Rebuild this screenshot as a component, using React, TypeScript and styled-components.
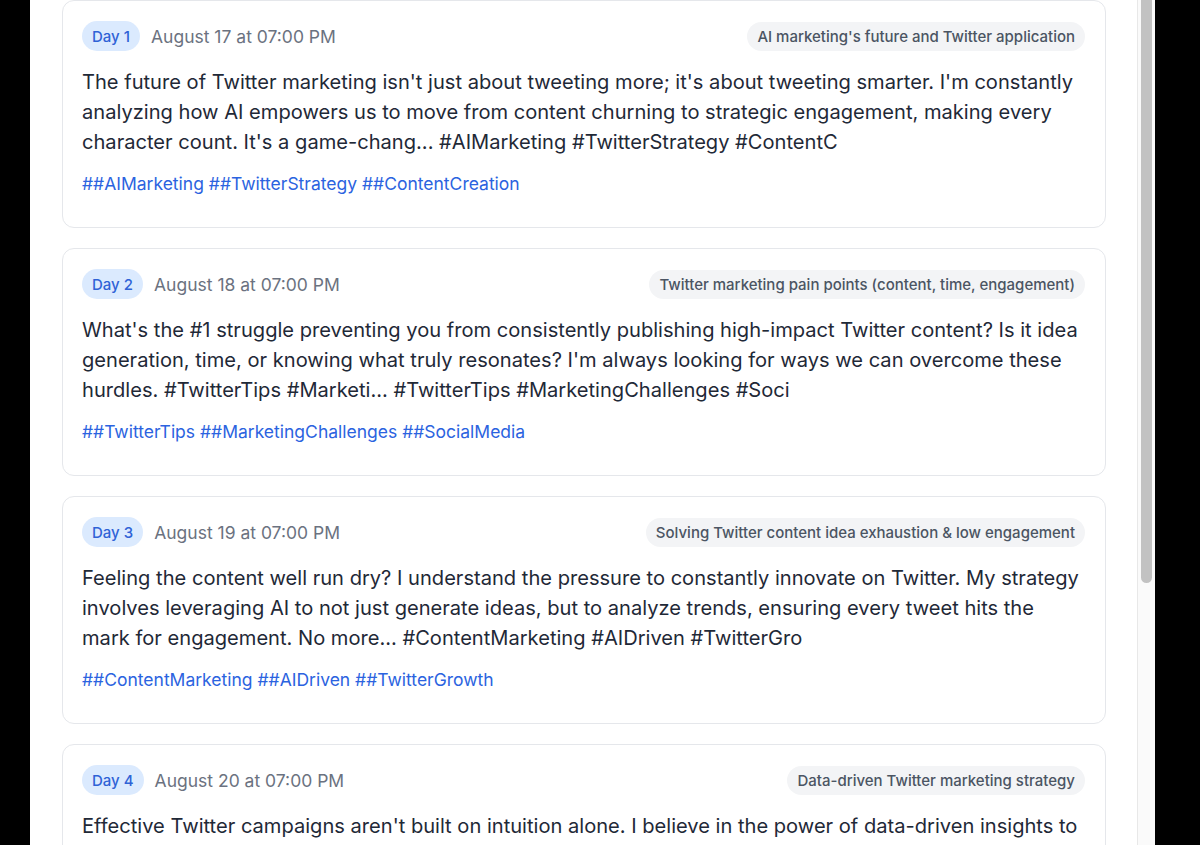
import React from "react";
import styled, { createGlobalStyle } from "styled-components";

const Global = createGlobalStyle`
  html, body {
    margin: 0;
    padding: 0;
    background: #000;
    height: 100%;
    overflow: hidden;
  }
  #root { height: 100%; }
  * { box-sizing: border-box; }
`;

const Frame = styled.div`
  display: flex;
  height: 845px;
  padding-left: 30px;
  padding-right: 45px;
  background: #000;
`;

const Panel = styled.div`
  flex: 1;
  display: flex;
  height: 100%;
  background: #fff;
  font-family: Inter, "Noto Sans", sans-serif;
`;

const Viewport = styled.div`
  flex: 1;
  min-width: 0;
  height: 100%;
  overflow: hidden;
`;

const ScrollTrack = styled.div`
  flex: 0 0 18px;
  height: 100%;
  background: #fafafa;
  border-left: 1px solid #e8e8e8;
  padding: 0 3px 0 3px;
`;

const ScrollThumb = styled.div`
  height: 583px;
  background: #c2c2c2;
  border-radius: 0 0 6px 6px;
`;

const List = styled.div`
  display: flex;
  flex-direction: column;
  gap: 20px;
  padding: 0 31px 8px 32px;
`;

const Card = styled.article`
  border: 1px solid #e5e7eb;
  border-radius: 12px;
  background: #fff;
  padding: 20px 20px 31px 19px;
`;

const Header = styled.div`
  display: flex;
  align-items: center;
  justify-content: space-between;
  margin-bottom: 16px;
`;

const Left = styled.div`
  display: flex;
  align-items: center;
  gap: 11px;
`;

const DayBadge = styled.span`
  display: inline-flex;
  align-items: center;
  height: 30px;
  padding: 0 10px;
  border-radius: 999px;
  background: #dbeafe;
  color: #2f62d6;
  font-size: 15px;
  font-weight: 500;
`;

const DateText = styled.span`
  color: #6b7280;
  font-size: 17.5px;
`;

const Topic = styled.span`
  display: inline-flex;
  align-items: center;
  height: 29px;
  padding: 0 10px;
  border-radius: 999px;
  background: #f3f4f6;
  color: #4b5563;
  font-size: 15px;
  font-weight: 500;
`;

const Body = styled.p`
  margin: 0;
  color: #1f2937;
  font-size: 20.1px;
  line-height: 30px;
`;

const Tags = styled.div`
  margin-top: 15px;
  color: #2b63e0;
  font-size: 17.5px;
  line-height: 24px;
`;

const posts = [
  {
    day: 1,
    date: "August 17 at 07:00 PM",
    topic: "AI marketing's future and Twitter application",
    body:
      "The future of Twitter marketing isn't just about tweeting more; it's about tweeting smarter. I'm constantly analyzing how AI empowers us to move from content churning to strategic engagement, making every character count. It's a game-chang... #AIMarketing #TwitterStrategy #ContentC",
    tags: ["#AIMarketing", "#TwitterStrategy", "#ContentCreation"],
  },
  {
    day: 2,
    date: "August 18 at 07:00 PM",
    topic: "Twitter marketing pain points (content, time, engagement)",
    body:
      "What's the #1 struggle preventing you from consistently publishing high-impact Twitter content?  Is it idea generation, time, or knowing what truly resonates? I'm always looking for ways we can overcome these hurdles. #TwitterTips #Marketi... #TwitterTips #MarketingChallenges #Soci",
    tags: ["#TwitterTips", "#MarketingChallenges", "#SocialMedia"],
  },
  {
    day: 3,
    date: "August 19 at 07:00 PM",
    topic: "Solving Twitter content idea exhaustion & low engagement",
    body:
      "Feeling the content well run dry? I understand the pressure to constantly innovate on Twitter. My strategy involves leveraging AI to not just generate ideas, but to analyze trends, ensuring every tweet hits the mark for engagement. No more... #ContentMarketing #AIDriven #TwitterGro",
    tags: ["#ContentMarketing", "#AIDriven", "#TwitterGrowth"],
  },
  {
    day: 4,
    date: "August 20 at 07:00 PM",
    topic: "Data-driven Twitter marketing strategy",
    body:
      "Effective Twitter campaigns aren't built on intuition alone. I believe in the power of data-driven insights to refine every post, timing and message, turning analytics into action. Let the numbers lead... #DataDriven #TwitterMarketing #Analyt",
    tags: ["#DataDriven", "#TwitterMarketing", "#Analytics"],
  },
  {
    day: 5,
    date: "August 21 at 07:00 PM",
    topic: "Building community through consistent engagement",
    body:
      "Growth on Twitter comes from conversations, not broadcasts. Replying thoughtfully, sharing others' ideas and showing up consistently builds a community that trusts your voice. Engagement is the... #Community #Engagement #TwitterGr",
    tags: ["#Community", "#Engagement", "#TwitterGrowth"],
  },
];

export default function App() {
  return (
    <>
      <Global />
      <Frame>
        <Panel>
          <Viewport>
            <List>
              {posts.map((p) => (
                <Card key={p.day}>
                  <Header>
                    <Left>
                      <DayBadge>Day {p.day}</DayBadge>
                      <DateText>{p.date}</DateText>
                    </Left>
                    <Topic>{p.topic}</Topic>
                  </Header>
                  <Body>{p.body}</Body>
                  <Tags>{p.tags.map((t) => "#" + t).join(" ")}</Tags>
                </Card>
              ))}
            </List>
          </Viewport>
          <ScrollTrack>
            <ScrollThumb />
          </ScrollTrack>
        </Panel>
      </Frame>
    </>
  );
}
